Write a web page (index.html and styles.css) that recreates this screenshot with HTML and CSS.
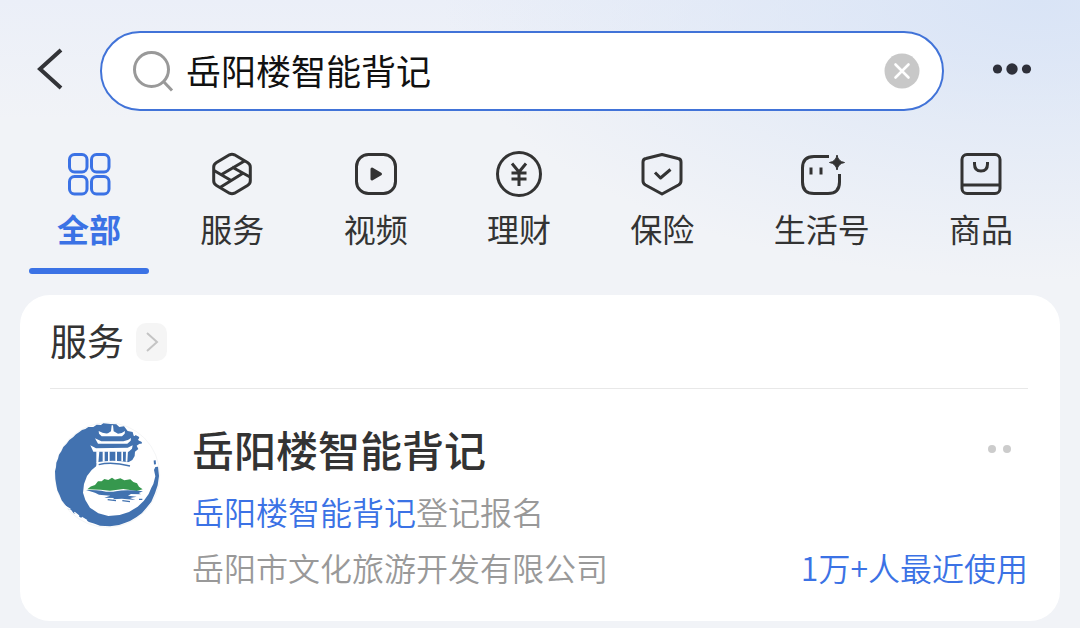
FILE: index.html
```html
<!DOCTYPE html>
<html lang="zh-CN">
<head>
  <meta charset="UTF-8">
  <meta name="viewport" content="width=device-width, initial-scale=1.0">
  <title>搜索</title>
  <link rel="stylesheet" href="styles.css">
</head>
<body>
  <header class="topbar">
    <button class="icon-btn" type="button" aria-label="返回">
      <svg width="28" height="42" viewBox="0 0 28 42" fill="none" stroke="#333438" stroke-width="4"><path d="M25 2 L4 21 L25 40"/></svg>
    </button>
    <form class="search" role="search">
      <label for="keyword" aria-label="搜索">
        <svg width="42" height="42" viewBox="-1 -1 42 42" fill="none" stroke="#999" stroke-width="3"><circle cx="18.500" cy="18.500" r="17"/><path d="M30.500 30.500 L39 39.500"/></svg>
      </label>
      <input id="keyword" type="text" value="岳阳楼智能背记">
      <button class="icon-btn" type="reset" aria-label="清除">
        <svg width="36" height="36" viewBox="0 0 36 36"><circle cx="18" cy="18" r="17.500" fill="#c8c8c8"/><path d="M11.500 11.500 L24.500 24.500 M24.500 11.500 L11.500 24.500" stroke="#fff" stroke-width="2.600" stroke-linecap="round"/></svg>
      </button>
    </form>
    <button class="icon-btn" type="button" aria-label="更多">
      <svg width="40" height="12" viewBox="0 0 40 12" fill="#2e303a"><circle cx="5.500" cy="6" r="4.600"/><circle cx="20" cy="6" r="5.700"/><circle cx="34.500" cy="6" r="4.600"/></svg>
    </button>
  </header>

  <nav class="tabs">
    <a class="tab active" href="#all">
      <svg class="tab-icon" viewBox="0 0 48 48"><rect x="4.500" y="4.500" width="17.500" height="17.500" rx="5"/><rect x="26.500" y="4.500" width="17.500" height="17.500" rx="5"/><rect x="4.500" y="26.500" width="17.500" height="17.500" rx="5"/><rect x="26.500" y="26.500" width="17.500" height="17.500" rx="5"/></svg>
      <span>全部</span>
    </a>
    <a class="tab" href="#service">
      <svg class="tab-icon" viewBox="0 0 48 48"><path d="M21.500 4.800 Q24 3.500 26.500 4.800 L39.500 12.500 Q42.300 14.200 42.300 17 V31 Q42.300 33.800 39.500 35.500 L26.500 43.200 Q24 44.500 21.500 43.200 L8.500 35.500 Q5.700 33.800 5.700 31 V17 Q5.700 14.200 8.500 12.500 Z"/><path d="M36.500 11 L13.500 24.500 M6 20.500 L24 31 M42 27 L24 17 M12 37.500 L34.500 23.500"/></svg>
      <span>服务</span>
    </a>
    <a class="tab" href="#video">
      <svg class="tab-icon" viewBox="0 0 48 48"><rect x="4.500" y="4.500" width="39" height="39" rx="12"/><path class="solid" d="M20 19 L28.500 24 L20 29 Z"/></svg>
      <span>视频</span>
    </a>
    <a class="tab" href="#finance">
      <svg class="tab-icon" viewBox="0 0 48 48"><circle cx="24" cy="24" r="21.500"/><path d="M17 13.500 L24 22 L31 13.500 M16.500 23 H31.500 M16.500 29 H31.500 M24 22 V36"/></svg>
      <span>理财</span>
    </a>
    <a class="tab" href="#insurance">
      <svg class="tab-icon" viewBox="0 0 48 48"><path d="M24 4.500 L40 8.500 Q43 9 43 12 V31 Q43 33.500 40.500 35 L24 44 L7.500 35 Q5 33.500 5 31 V12 Q5 9 8 8.500 Z"/><path d="M17 22.500 L22.500 28 L32.500 19.500"/></svg>
      <span>保险</span>
    </a>
    <a class="tab" href="#life">
      <svg class="tab-icon" viewBox="0 0 48 48"><path d="M31 6.500 H16 Q4.500 6.500 4.500 18 V32 Q4.500 43.500 16 43.500 H30 Q41.500 43.500 41.500 32 V24"/><path d="M13 17.500 V24.500 M23 17.500 V24.500"/><path class="star" d="M39 5 Q40 11.500 46.500 12.500 Q40 13.500 39 20 Q38 13.500 31.500 12.500 Q38 11.500 39 5 Z"/></svg>
      <span>生活号</span>
    </a>
    <a class="tab" href="#goods">
      <svg class="tab-icon" viewBox="0 0 48 48"><rect x="5" y="4.500" width="38" height="39" rx="5"/><path d="M5 35 H43 M17.500 12 V14 Q17.500 21 24 21 Q30.500 21 30.500 14 V12"/></svg>
      <span>商品</span>
    </a>
  </nav>

  <main class="card">
    <div class="card-head">
      <h2>服务</h2>
      <a class="card-more" href="#service" aria-label="查看更多服务">
        <svg width="14" height="20" viewBox="0 0 14 20" fill="none" stroke="#c4c4c4" stroke-width="2"><path d="M2 1 L12 10 L2 19"/></svg>
      </a>
    </div>
    <article class="result">
      <svg class="logo" viewBox="42 33 324 324" aria-hidden="true">
        <circle cx="202" cy="195" r="157" fill="#fff" stroke="#eef0f2" stroke-width="2"/>
        <path fill="#4272b0" d="M212 42 L190 40 L183 45 L170 44 L160 51 L145 51 L136 57 L126 60 L117 67 L108 73 L99 82 L88 90 L79 102 L70 111 L64 124 L57 134 L54 146 L49 158 L48 172 L45 184 L46 207 L49 226 L52 241 L59 256 L65 271 L76 285 L86 298 L93 299 L101 310 L111 313 L120 322 L132 326 L147 336 L164 341 L180 347 L210 349 L237 345 L254 339 L270 333 L290 321 L306 309 L319 294 L334 275 L345 250 L353 226 L357 198 L354 170 L346 171 L342 180 L346 199 L340 222 L334 233 L326 252 L311 273 L293 290 L267 306 L239 315 L205 318 L175 310 L150 293 L136 270 L129 248 L132 222 L141 198 L155 180 L172 166 L200 163 L265 157 L277 150 L284 138 L285 125 L295 117 L290 107 L305 97 L294 90 L298 82 L281 77 L278 66 L263 63 L252 49 L238 51 L229 43 Z"/>
        <path fill="none" stroke="#fff" stroke-width="4" d="M75 288 L91 298 M103 307 L117 318 M125 322 L141 332"/>
        <g fill="#fff">
          <path d="M215 46 H219 L221 64 L234 71 Q246 71 255 63 L254 71 L246 79 L185 79 L177 71 L176 63 Q190 72 204 70 L213 64 Z"/>
          <path d="M165 85 L184 94 H250 Q263 93 273 84 L272 92 L262 101 H174 Z"/>
          <path d="M151 106 L168 115 L263 113 L278 106 L276 116 L266 125 H160 Z"/>
          <path d="M169 124 H178 L175 160 H169 Z M188 124 H194 V155 H188 Z M204 124 H209 V153 H204 Z M226 124 H231 V153 H226 Z M244 124 H249 V154 H244 Z M258 122 H264 L262 155 H257 Z"/>
          <path d="M170 157 Q220 147 272 158 L268 173 L168 174 Z"/>
        </g>
        <g fill="none" stroke="#4272b0" stroke-width="4">
          <path d="M176 164 Q215 154 270 168"/>
          <path d="M285 78 L296 84 M284 93 L305 99 M344 151 L345 163" stroke-width="6"/>
        </g>
        <path fill="#36984e" d="M142 238 Q151 228 165 225 L174 214 L185 214 L193 207 L205 210 L216 203 L225 209 L241 205 L253 211 L271 208 L280 216 L291 220 L297 230 L308 238 L290 243 L250 237 L210 242 L182 239 Z"/>
        <path fill="#4272b0" d="M138 240 Q165 239 184 242 Q208 248 228 244 Q257 237 309 244 L296 249 L303 253 L273 252 L264 257 L290 260 L270 264 L286 270 L246 266 L218 268 L223 264 L193 263 L211 257 L177 254 L165 248 Z"/>
        <path fill="none" stroke="#4272b0" stroke-width="4" d="M203 269 L228 272 M247 272 L270 275 M297 268 H307"/>
      </svg>
      <div class="result-body">
        <div class="line">
          <h3>岳阳楼智能背记</h3>
          <button class="icon-btn dots" type="button" aria-label="更多操作">
            <svg width="24" height="8" viewBox="0 0 24 8" fill="#ccc"><circle cx="4" cy="4" r="4"/><circle cx="19" cy="4" r="4"/></svg>
          </button>
        </div>
        <p><a href="#result">岳阳楼智能背记</a>登记报名</p>
        <div class="line">
          <p>岳阳市文化旅游开发有限公司</p>
          <p class="usage">1万+人最近使用</p>
        </div>
      </div>
    </article>
  </main>
</body>
</html>
```
FILE: styles.css
```css
* {
  box-sizing: border-box;
}

body {
  margin: 0;
  min-height: 100vh;
  font-family: "Noto Sans CJK SC", sans-serif;
  color: #333;
  background: radial-gradient(ellipse 55% 280px at 96% 0, #d9e4f6, rgba(236, 239, 248, 0)),
    linear-gradient(#ebeff8, #f1f3f7 120px);
}

h2,
h3,
p {
  margin: 0;
}

a {
  color: #3b72e5;
  text-decoration: none;
}

svg {
  display: block;
}

.icon-btn {
  padding: 0;
  border: none;
  background: none;
  cursor: pointer;
}

.topbar {
  display: grid;
  grid-template-columns: 100px 1fr 136px;
  align-items: center;
  justify-items: center;
  padding-top: 31px;
}

.topbar > .icon-btn {
  padding-bottom: 4px;
}

.search {
  display: flex;
  align-items: center;
  gap: 12px;
  width: 100%;
  height: 80px;
  padding: 0 22px 0 30px;
  border: 2px solid #4173d8;
  border-radius: 40px;
  background: #fff;
}

.search input {
  flex: 1;
  min-width: 0;
  padding: 0 0 4px;
  border: none;
  outline: none;
  background: none;
  font-family: inherit;
  font-size: 35px;
  color: #111;
}

.tabs {
  display: flex;
  justify-content: space-between;
  padding: 39px 39px 0 29px;
}

.tab {
  padding: 0 28px;
  color: #333;
  font-size: 32px;
  line-height: 40px;
  text-align: center;
}

.tab-icon {
  width: 48px;
  height: 48px;
  margin: 0 auto 10px;
  fill: none;
  stroke: currentColor;
  stroke-width: 3;
  stroke-linejoin: round;
}

.tab-icon .solid {
  fill: currentColor;
}

.tab-icon .star {
  fill: currentColor;
  stroke-width: 1;
}

.tab.active {
  color: #3b72e5;
  font-weight: bold;
}

.tab.active::after {
  content: "";
  display: block;
  height: 6px;
  margin: 20px -28px 0;
  border-radius: 3px;
  background: #3b72e5;
}

.card {
  margin: 21px 20px 7px;
  padding: 0 32px 26px 30px;
  border-radius: 30px;
  background: #fff;
}

.card-head {
  display: flex;
  align-items: center;
  gap: 12px;
  height: 94px;
  border-bottom: 1px solid #e8e8e8;
}

.card-head h2 {
  padding-bottom: 4px;
  font-size: 37px;
  font-weight: normal;
}

.card-more {
  display: flex;
  align-items: center;
  justify-content: center;
  width: 31px;
  height: 38px;
  border-radius: 10px;
  background: #f5f5f5;
}

.result {
  display: flex;
  gap: 30px;
  padding-top: 32px;
}

.logo {
  flex: none;
  width: 108px;
  height: 108px;
  margin-left: 4px;
}

.result-body {
  flex: 1;
  color: #999;
  font-size: 32px;
  font-weight: 350;
  line-height: 56px;
}

.line {
  display: flex;
  align-items: center;
  justify-content: space-between;
}

.result-body h3 {
  color: #333;
  font-size: 42px;
  font-weight: 500;
}

.result-body .line:first-child {
  margin-bottom: 6px;
}

.dots {
  margin-right: 16px;
}

.usage {
  color: #3b72e5;
}
```
